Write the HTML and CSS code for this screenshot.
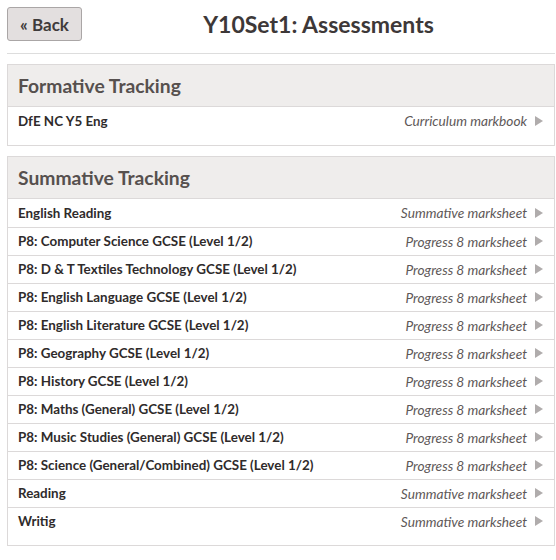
FILE: index.html
```html
<!DOCTYPE html>
<html>
<head>
<meta charset="utf-8">
<link rel="stylesheet" href="styles.css">
</head>
<body>
<div class="page">
  <header class="topbar">
    <button class="back">« Back</button>
    <h1 class="title">Y10Set1: Assessments</h1>
  </header>

  <section class="panel">
    <h2 class="panel-head">Formative Tracking</h2>
    <ul class="rows">
      <li class="row"><span class="name">DfE NC Y5 Eng</span><span class="type">Curriculum markbook</span><span class="arrow"></span></li>
    </ul>
  </section>

  <section class="panel">
    <h2 class="panel-head">Summative Tracking</h2>
    <ul class="rows">
      <li class="row"><span class="name">English Reading</span><span class="type">Summative marksheet</span><span class="arrow"></span></li>
      <li class="row"><span class="name">P8: Computer Science GCSE (Level 1/2)</span><span class="type">Progress 8 marksheet</span><span class="arrow"></span></li>
      <li class="row"><span class="name">P8: D &amp; T Textiles Technology GCSE (Level 1/2)</span><span class="type">Progress 8 marksheet</span><span class="arrow"></span></li>
      <li class="row"><span class="name">P8: English Language GCSE (Level 1/2)</span><span class="type">Progress 8 marksheet</span><span class="arrow"></span></li>
      <li class="row"><span class="name">P8: English Literature GCSE (Level 1/2)</span><span class="type">Progress 8 marksheet</span><span class="arrow"></span></li>
      <li class="row"><span class="name">P8: Geography GCSE (Level 1/2)</span><span class="type">Progress 8 marksheet</span><span class="arrow"></span></li>
      <li class="row"><span class="name">P8: History GCSE (Level 1/2)</span><span class="type">Progress 8 marksheet</span><span class="arrow"></span></li>
      <li class="row"><span class="name">P8: Maths (General) GCSE (Level 1/2)</span><span class="type">Progress 8 marksheet</span><span class="arrow"></span></li>
      <li class="row"><span class="name">P8: Music Studies (General) GCSE (Level 1/2)</span><span class="type">Progress 8 marksheet</span><span class="arrow"></span></li>
      <li class="row"><span class="name">P8: Science (General/Combined) GCSE (Level 1/2)</span><span class="type">Progress 8 marksheet</span><span class="arrow"></span></li>
      <li class="row"><span class="name">Reading</span><span class="type">Summative marksheet</span><span class="arrow"></span></li>
      <li class="row"><span class="name">Writig</span><span class="type">Summative marksheet</span><span class="arrow"></span></li>
    </ul>
  </section>
</div>
</body>
</html>
```

FILE: styles.css
```css
* { box-sizing: border-box; }
html, body { margin: 0; padding: 0; background: #fff; }
body {
  font-family: Lato, "Open Sans", sans-serif;
  color: #333;
}
.page {
  padding: 7px 1px 0 7px;
}
.topbar {
  display: flex;
  align-items: flex-start;
  height: 47px;
  border-bottom: 1px solid #ddd;
}
.back {
  width: 75px;
  height: 34px;
  background: #e3dfdf;
  border: 1px solid #aaa6a6;
  border-radius: 3px;
  font-family: Lato, sans-serif;
  font-size: 17px;
  font-weight: 700;
  color: #3f3b3b;
  padding: 0;
}
.title {
  flex: 1;
  margin: 0;
  text-align: center;
  font-size: 23px;
  font-weight: 700;
  color: #3d3838;
  line-height: 34px;
}
.panel {
  margin-top: 10px;
  border: 1px solid #dcd9d9;
}
.panel-head {
  margin: 0;
  height: 42px;
  background: #efedec;
  border-bottom: 1px solid #dcd9d9;
  font-size: 19.3px;
  font-weight: 700;
  color: #56504e;
  padding: 0 10px;
  line-height: 41px;
}
.rows {
  list-style: none;
  margin: 0;
  padding: 0 0 10px;
}
.row {
  display: flex;
  align-items: center;
  height: 28px;
  padding: 0 10px 1px;
  border-top: 1px solid #dcd9d9;
  font-size: 13.4px;
}
.row:first-child { border-top: none; }
.name {
  flex: 1;
  font-weight: 700;
  color: #2f2b2b;
}
.type {
  font-style: italic;
  color: #5e5858;
  font-size: 13.7px;
}
.arrow {
  width: 0;
  height: 0;
  margin-left: 8px;
  margin-right: 1px;
  border-top: 5px solid transparent;
  border-bottom: 5px solid transparent;
  border-left: 8px solid #b0acac;
}
```
